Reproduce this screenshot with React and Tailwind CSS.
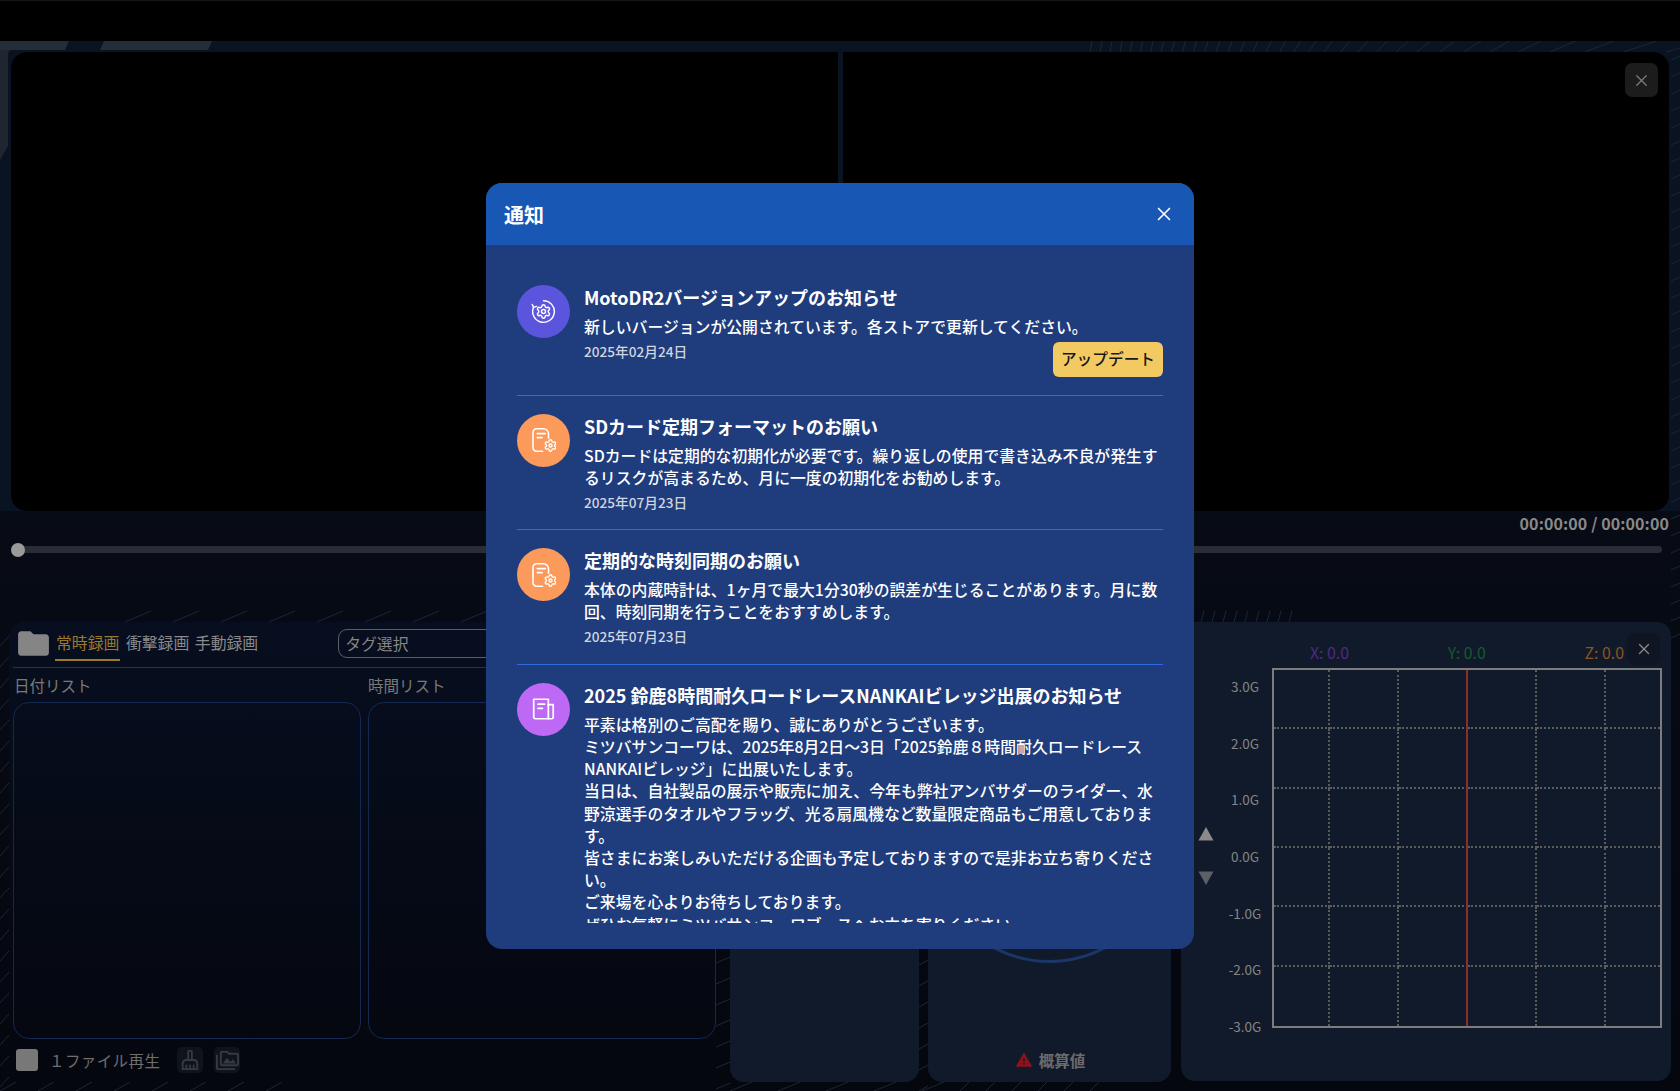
import React from "react";
import { X } from "lucide-react";
import {
  MdFolder,
  MdOutlineCleaningServices,
  MdOutlinePermMedia,
  MdWarning,
} from "react-icons/md";

const GEAR =
  "M9.671 4.136a2.34 2.34 0 0 1 4.659 0 2.34 2.34 0 0 0 3.319 1.915 2.34 2.34 0 0 1 2.33 4.033 2.34 2.34 0 0 0 0 3.831 2.34 2.34 0 0 1-2.33 4.033 2.34 2.34 0 0 0-3.319 1.915 2.34 2.34 0 0 1-4.659 0 2.34 2.34 0 0 0-3.32-1.915 2.34 2.34 0 0 1-2.33-4.033 2.34 2.34 0 0 0 0-3.831A2.34 2.34 0 0 1 6.35 6.051a2.34 2.34 0 0 0 3.319-1.915";

const UpdateIcon = () => (
  <svg width="25" height="25" viewBox="0 0 24 24" fill="none" stroke="white" strokeWidth="1.4" strokeLinecap="round" strokeLinejoin="round">
    <path d="M12 1.6a10.4 10.4 0 1 1-9.6 6.4" />
    <path d="M1.2 5.2 2.4 8l2.9-.9" />
    <g transform="translate(4.2 4.2) scale(0.65)" strokeWidth="2.2">
      <path d={GEAR} />
      <circle cx="12" cy="12" r="3" />
    </g>
  </svg>
);

const DocGearIcon = () => (
  <svg className="ml-[1px]" width="24" height="24" viewBox="0 0 24 24" fill="none" stroke="white" strokeWidth="1.6" strokeLinecap="round" strokeLinejoin="round">
    <path d="M10.5 23.2H4.5a3.5 3.5 0 0 1-3.5-3.5V4.3A3.5 3.5 0 0 1 4.5.8h7a5 5 0 0 1 5 5v4.5" />
    <path d="M5.2 5.6h8.2M5.2 9.6h5" />
    <g transform="translate(11.54 10.54) scale(0.58)" strokeWidth="2.4">
      <path d={GEAR} />
      <circle cx="12" cy="12" r="2.6" />
    </g>
  </svg>
);

const NewsIcon = () => (
  <svg width="26" height="26" viewBox="0 0 24 24" fill="none" stroke="white" strokeWidth="1.6" strokeLinecap="round" strokeLinejoin="round">
    <path d="M2.5 3h13.5v18H4a1.5 1.5 0 0 1-1.5-1.5z" />
    <path d="M16 8h4.5v11.5A1.5 1.5 0 0 1 19 21h-3" />
    <path d="M6.5 7.5h6M6.5 11.5h4" />
  </svg>
);

const notices = [
  {
    icon: <UpdateIcon />,
    color: "bg-[#5a55dc]",
    title: "MotoDR2バージョンアップのお知らせ",
    body: ["新しいバージョンが公開されています。各ストアで更新してください。"],
    date: "2025年02月24日",
    action: "アップデート",
  },
  {
    icon: <DocGearIcon />,
    color: "bg-[#fb9a5b]",
    title: "SDカード定期フォーマットのお願い",
    body: ["SDカードは定期的な初期化が必要です。繰り返しの使用で書き込み不良が発生するリスクが高まるため、月に一度の初期化をお勧めします。"],
    date: "2025年07月23日",
  },
  {
    icon: <DocGearIcon />,
    color: "bg-[#fb9a5b]",
    title: "定期的な時刻同期のお願い",
    body: ["本体の内蔵時計は、1ヶ月で最大1分30秒の誤差が生じることがあります。月に数回、時刻同期を行うことをおすすめします。"],
    date: "2025年07月23日",
  },
  {
    icon: <NewsIcon />,
    color: "bg-[#bd69f5]",
    title: "2025 鈴鹿8時間耐久ロードレースNANKAIビレッジ出展のお知らせ",
    body: [
      "平素は格別のご高配を賜り、誠にありがとうございます。",
      "ミツバサンコーワは、2025年8月2日～3日「2025鈴鹿８時間耐久ロードレースNANKAIビレッジ」に出展いたします。",
      "当日は、自社製品の展示や販売に加え、今年も弊社アンバサダーのライダー、水野涼選手のタオルやフラッグ、光る扇風機など数量限定商品もご用意しております。",
      "皆さまにお楽しみいただける企画も予定しておりますので是非お立ち寄りください。",
      "ご来場を心よりお待ちしております。",
      "ぜひお気軽にミツバサンコーワブースへお立ち寄りください。",
    ],
    date: "2025年07月23日",
  },
];

// faint hatching that shows through the gaps between panels
const hatch = (x0, x1, y0, y1, step, dx) => {
  const out = [];
  for (let x = x0; x < x1; x += step) {
    out.push(`M${x} ${y1}L${x + dx} ${y0}`);
  }
  return out.join("");
};

const topStrip = () => {
  const out = [];
  let x = 1090;
  while (x < 1690) {
    const t = (x - 1090) / 600;
    out.push(`M${x} 52L${x + 2 + t * t * 40} 41`);
    x += 10 + t * t * 42;
  }
  return out.join("");
};

const rightStrip = () => {
  const out = [];
  for (let y = 60; y < 640; y += 17) out.push(`M1671 ${y}L1680 ${y - 4}`);
  return out.join("");
};

const leftStrip = () => {
  const out = [];
  for (let y = 640; y < 1095; y += 21) out.push(`M0 ${y + 6}L9 ${y - 4}`);
  return out.join("");
};

const gapLines = () => {
  const out = [];
  for (let y = 960; y < 1090; y += 21) {
    out.push(`M716 ${y + 3}L730 ${y - 3}`);
    out.push(`M919 ${y + 5}L928 ${y}`);
  }
  return out.join("");
};

const HatchLayer = () => (
  <svg className="absolute inset-0 z-0" width="1680" height="1091" viewBox="0 0 1680 1091">
    <path d="M0 41H69L65 50H0zM104 41H212L208 50H100z" fill="#252d39" />
    <path d="M0 50H11C9 50 8 52 8 56V146L0 160z" fill="#1f2630" />
    <g stroke="#1e2633" strokeWidth="1" fill="none">
      <path d={topStrip()} />
      <path d={rightStrip()} />
      <path d={leftStrip()} />
      <path d={gapLines()} />
      <path d={hatch(125, 470, 611, 622, 48, 26)} />
      <path d={hatch(1190, 1292, 611, 622, 11, 3)} />
      <path d={hatch(0, 300, 1082, 1091, 38, 16)} />
      <path d={hatch(730, 960, 1082, 1091, 48, 22)} />
      <path d={hatch(960, 1100, 1082, 1091, 26, 9)} />
    </g>
  </svg>
);

const VideoArea = () => (
  <section className="relative flex h-[470px] gap-[5px] px-[11px] pt-[11px]">
    <div className="flex-1 rounded-tl-[16px] rounded-bl-[16px] bg-black" />
    <div className="flex-1 rounded-tr-[16px] rounded-br-[16px] bg-black" />
    <button className="absolute top-[22px] right-[22px] flex h-[34px] w-[33px] items-center justify-center rounded-[7px] bg-[#1c1c1c] text-[#7d7d7d]">
      <X size={19} strokeWidth={1.6} />
    </button>
  </section>
);

const Timeline = () => (
  <section className="h-[111px] px-[11px]">
    <div className="text-right text-[16px] leading-[24px] font-bold tracking-[0.1px] text-[#8a8a8a]">
      00:00:00 / 00:00:00
    </div>
    <div className="relative mt-[11px] mr-[7px] h-[7px] rounded-full bg-[#2a2d35]">
      <span className="absolute top-[-3.5px] left-0 h-[14px] w-[14px] rounded-full bg-[#9a9a9a]" />
    </div>
  </section>
);

const RecordList = () => (
  <div className="flex h-[460px] w-[707px] flex-col rounded-t-[16px] bg-linear-to-b from-[#070e1f] to-[#05070f] pl-[4px]">
    <div className="flex h-[46px] items-start border-b border-[#1f3358] pl-[2px]">
      <MdFolder className="mt-[3px] text-[#858585]" size={37} />
      <div className="ml-[3px] flex gap-[5.5px] pt-[9px] text-[15.85px] leading-[24px] text-[#8a8a8a]">
        <span className="border-b-2 border-[#9a7a2c] px-[1px] pb-[4px] text-[#9a7a2c]">常時録画</span>
        <span>衝撃録画</span>
        <span>手動録画</span>
      </div>
      <div className="mt-[7px] ml-[80px] flex h-[29px] w-[340px] items-center rounded-[9px] border border-[#5a5f66] px-[6px] text-[15.85px] text-[#858585]">
        タグ選択
      </div>
    </div>
    <div className="grid h-[34px] grid-cols-2 gap-[7px] pt-[5px] text-[15.5px] leading-[24px] text-[#7a7a7a]">
      <span className="pl-[1px]">日付リスト</span>
      <span>時間リスト</span>
    </div>
    <div className="grid h-[337px] grid-cols-2 gap-[7px]">
      <div className="rounded-[16px] border border-[#142850]" />
      <div className="rounded-[16px] border border-[#142850]" />
    </div>
    <div className="flex items-center pt-[8px] pl-[3px]">
      <span className="h-[22px] w-[22px] rounded-[3px] bg-[#787878]" />
      <span className="ml-[11px] text-[15.5px] leading-[26px] tracking-[0.4px] text-[#6f6f6f]">１ファイル再生</span>
      <button className="ml-[17px] flex h-[26px] w-[26px] items-center justify-center rounded-[5px] bg-[#0f131c] text-[#353a42]">
        <MdOutlineCleaningServices size={22} />
      </button>
      <button className="ml-[11px] flex h-[26px] w-[26px] items-center justify-center rounded-[5px] bg-[#0f131c] text-[#353a42]">
        <MdOutlinePermMedia size={23} />
      </button>
    </div>
  </div>
);

const GaugeCards = () => (
  <>
    <div className="h-[460px] w-[189px] rounded-[14px] bg-[#111a2b]" />
    <div className="flex h-[460px] w-[243px] flex-col items-center rounded-[14px] bg-[#111a2b] pt-[100px] pb-[10px]">
      <div className="h-[241px] w-[241px] shrink-0 rounded-full border-[3px] border-[#1b3767]" />
      <div className="mt-auto flex items-center gap-[6px] pl-[1px] text-[15.5px] leading-[24px] font-bold text-[#6b6b6b]">
        <MdWarning className="text-[#8b141c]" size={18} />
        概算値
      </div>
    </div>
  </>
);

const gridCells = Array.from({ length: 36 }, (_, i) => i);

const GForceChart = () => (
  <div className="relative h-[459px] w-[490px] rounded-[14px] bg-[#111a2b] pr-[9px]">
    <div className="flex justify-end">
      <div className="w-[390px]">
        <div className="flex h-[46px] items-end justify-between px-[38px] pb-[3px] text-[15.85px] leading-[24px]">
          <span className="text-[#4f2a80]">X: 0.0</span>
          <span className="text-[#155a30]">Y: 0.0</span>
          <span className="text-[#8a5420]">Z: 0.0</span>
        </div>
        <div className="relative grid h-[360px] grid-cols-[56px_69px_69px_69px_69px_1fr] grid-rows-6 border-2 border-[#7c7c7c]">
          {gridCells.map((i) => {
            const col = i % 6;
            const row = Math.floor(i / 6);
            return (
              <div
                key={i}
                className={`border-dotted ${row < 5 ? "border-b-2 border-b-[#5c5c5c]" : ""} ${
                  col < 5 && col !== 2 ? "border-r-2 border-r-[#5c5c5c]" : ""
                }`}
              />
            );
          })}
          <span className="absolute top-0 bottom-0 left-[192px] w-[2px] bg-[#8c2f28]" />
        </div>
      </div>
    </div>
    <button className="absolute top-[11px] right-[11px] flex h-[32px] w-[33px] items-center justify-center rounded-[7px] bg-[#0f1522] text-[#8d8d8d]">
      <X size={18} strokeWidth={1.6} />
    </button>
    <div className="absolute top-[53px] left-[50px] flex h-[362px] w-[28px] flex-col items-center justify-between text-[13.5px] leading-[22px] text-[#858585]">
      {["3.0G", "2.0G", "1.0G", "0.0G", "-1.0G", "-2.0G", "-3.0G"].map((label) => (
        <span key={label}>{label}</span>
      ))}
    </div>
    <div className="absolute top-[204px] left-[17px] flex flex-col gap-[30px]">
      <svg width="16" height="15" viewBox="0 0 16 15"><path d="M8 1 15.5 14.5H.5z" fill="#8a8a8a" strokeLinejoin="round" /></svg>
      <svg width="16" height="15" viewBox="0 0 16 15"><path d="M.5.5h15L8 14z" fill="#5b5f66" /></svg>
    </div>
  </div>
);

const NoticeItem = ({ item, last }) => (
  <div className={`flex gap-[14px] pt-[18px] ${last ? "" : "border-b border-[#2f6ae0] pb-[17px]"}`}>
    <div className={`flex h-[53px] w-[53px] shrink-0 items-center justify-center rounded-full ${item.color}`}>
      {item.icon}
    </div>
    <div className="min-w-0 flex-1">
      <h3 className="text-[18px] leading-[25px] font-bold text-white">{item.title}</h3>
      <div className="mt-[6px] text-[15.85px] leading-[22.2px] font-medium text-white">
        {item.body.map((line) => (
          <p key={line}>{line}</p>
        ))}
      </div>
      <div className="mt-[3.5px] flex items-start justify-between">
        <span className="text-[13.65px] leading-[19.6px] font-medium text-[#d0d5df]">{item.date}</span>
        {item.action && (
          <button className="mb-[1px] h-[35px] w-[110px] rounded-[6px] bg-[#f3ca62] text-[15.7px] font-medium text-[#16181d]">
            {item.action}
          </button>
        )}
      </div>
    </div>
  </div>
);

const NoticeModal = () => (
  <div className="absolute top-[183px] left-[486px] z-20 flex h-[766px] w-[708px] flex-col overflow-hidden rounded-[16px] bg-[#1f3c7c]">
    <div className="flex h-[62px] shrink-0 items-center justify-between bg-[#1858b4] pr-[19px] pl-[18px]">
      <h2 className="pt-[1px] text-[20px] font-bold text-white">通知</h2>
      <X size={22} strokeWidth={1.8} className="text-white" />
    </div>
    <div className="mx-[31px] mt-[22px] h-[656px] overflow-hidden">
      {notices.map((item, i) => (
        <NoticeItem key={item.title} item={item} last={i === notices.length - 1} />
      ))}
    </div>
  </div>
);

const App = () => {
  return (
    <div className="relative h-[1091px] w-full overflow-hidden bg-[linear-gradient(#0a1322_0,#0a1322_511px,#070b15_511px,#05070f_100%)] [font-family:'Noto_Sans_CJK_JP','Noto_Sans',sans-serif]">
      <HatchLayer />
      <div className="relative z-10">
        <div className="h-[41px] border-t border-[#151515] bg-black" />
        <VideoArea />
        <Timeline />
        <div className="flex pl-[9px]">
          <RecordList />
          <div className="ml-[14px] flex gap-[9px]">
            <GaugeCards />
          </div>
          <div className="ml-[10px]">
            <GForceChart />
          </div>
        </div>
      </div>
      <NoticeModal />
    </div>
  );
};

export default App;
